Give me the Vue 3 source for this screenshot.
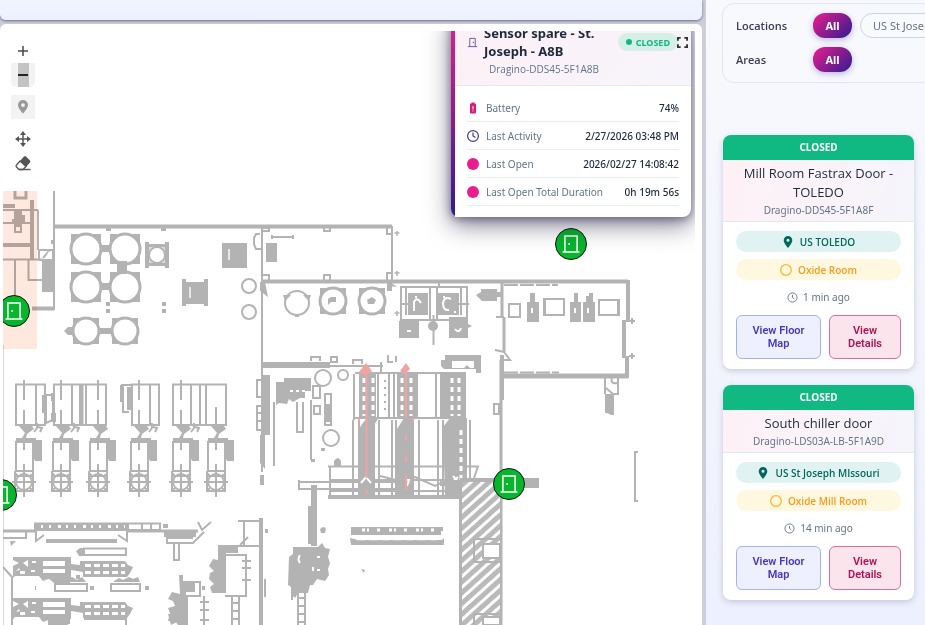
<script setup>
const MAP = { x: 3, y: 31, w: 692, h: 594 }

const markers = [
  { x: 14, y: 311 },
  { x: 1, y: 495 },
  { x: 571, y: 244 },
  { x: 508.5, y: 484 },
]
const place = (m) => ({
  left: `${((m.x - MAP.x) / MAP.w) * 100}%`,
  top: `${((m.y - MAP.y) / MAP.h) * 100}%`,
})

const rows = [
  { label: 'Battery', value: '74%', icon: 'battery' },
  { label: 'Last Activity', value: '2/27/2026 03:48 PM', icon: 'clock' },
  { label: 'Last Open', value: '2026/02/27 14:08:42', icon: 'dot' },
  { label: 'Last Open Total Duration', value: '0h 19m 56s', icon: 'dot' },
]

const cards = [
  { name: 'Mill Room Fastrax Door - TOLEDO', id: 'Dragino-DDS45-5F1A8F', site: 'US TOLEDO', area: 'Oxide Room', ago: '1 min ago' },
  { name: 'South chiller door', id: 'Dragino-LDS03A-LB-5F1A9D', site: 'US St Joseph MIssouri', area: 'Oxide Mill Room', ago: '14 min ago' },
]

const tanks = [
  [86, 249, 15], [125, 249, 15], [86, 287, 15], [125, 287, 15],
  [86, 331, 13], [125, 331, 13], [333, 301, 13], [372, 301, 13],
]
const units = [24, 61, 98, 139, 181, 216]
const spokes = [0, 45, 90, 135]
const mixers = [[13, 557], [13, 598]]
</script>

<template>
  <div class="app">
    <main class="left">
      <div class="toolbar-end"></div>
      <section class="panel">
        <div class="map">
          <svg class="plan" viewBox="3 31 692 594" aria-hidden="true">
            <defs>
              <pattern id="hatch" width="8" height="8" patternUnits="userSpaceOnUse" patternTransform="rotate(-42)">
                <rect width="8" height="8" fill="#bababa" />
                <rect width="8" height="3" fill="#fff" />
              </pattern>
            </defs>

            <!-- north-west rooms -->
            <g class="ln">
              <path d="M54 191V310M38 210V250M3 210H38M3 223H30M3 259.500H42M15 260V297M28.500 260V280H42M38 250H54" />
              <path d="M3 345V625" stroke-width="1" />
              <path d="M15 191V198H26V191" stroke-width="3" />
              <path d="M54 226.500H392" stroke-width="4" />
              <path d="M3 206H15M3 245H34M32 200V260M32 308.500H54" stroke-width="4" />
              <path d="M39 250H53V260H39ZM43 258L50 250" />
            </g>
            <path class="fl" d="M42 260H54V292H42ZM14 211H22V215H25V222H22V233H14V224H12V219H14ZM51 240h4v4h-4z" />
            <path d="M16 227h4v4h-4zM49 251l3 4-3 4h-4z" fill="#fff" />
            <path class="fl" d="M99 328h15v6h-15zM64 331l4-4h4v8h-4zM106 228h5v3h-5zM161 228h5v3h-5zM106 302h4v4h-4zM106 309h4v4h-4zM162 302h4v4h-4zM162 309h4v4h-4z" />
            <g v-for="(t, i) in tanks" :key="'t' + i">
              <rect class="fl" :x="t[0] - t[2]" :y="t[1] - t[2]" :width="t[2] * 2" :height="t[2] * 2" />
              <circle :cx="t[0]" :cy="t[1]" :r="t[2] + 1" fill="#fff" />
              <circle class="tank" :cx="t[0]" :cy="t[1]" :r="t[2]" />
              <path class="fl" :transform="`translate(${t[0]} ${t[1]}) scale(${t[2] / 15})`" d="M-15-15h7l-7 7zM15-15h-7l7 7zM-15 15h7l-7-7zM15 15h-7l7-7z" />
            </g>
            <path class="fl" d="M117 261h10v13h-10zM101 245h10v7h-10zM101 283h10v7h-10z" />
            <path class="fl" d="M145 242h4v2h16v-2h4v26h-4v-2h-16v2h-4zM222 243h25v25h-25zM182 279h4v3h18v-3h4v27h-4v-2h-18v2h-4z" />
            <rect x="149" y="247" width="16" height="16" fill="#ddd" />
            <circle class="tank thin" cx="157" cy="255" r="8" />
            <path d="M229 249v11M190 287v11" stroke="#e8e8e8" stroke-width="2" />
            <g class="tank thin">
              <circle cx="249" cy="286" r="7" /><circle cx="249" cy="312" r="7" />
              <circle cx="297" cy="303" r="12" />
            </g>
            <path class="fl" d="M283 295h8l-6 6zM311 295h-8l6 6zM295 314h4v3h-4zM328 299l3-2h5v5h-5l-3 3zM367 300l5-3 4 3-2 4h-6z" />

            <!-- centre hall -->
            <g class="ln">
              <path d="M262 226V472M392 226V281M272 237H293M272 235v4M293 235v4" />
              <path d="M262 281.500H628" stroke-width="4" />
              <path d="M262 228h7v3h-7M324 228v3h6v-3M387 228v6h5M262 275h7v6M324 281v-6h6v6M387 281v-8h5M260 234h-4l-2 4v6l2 5h5" />
              <path d="M397 231v5M394.500 233h5M397 271v5M394.500 273h5M397 311v5M394.500 313h5" stroke-width="1.500" />
              <path d="M401 287H467V320H401ZM406 287V315M430 287V320M437 287V320M461 287V315M401 304h8M459 304h10M433.500 315V345M439 281v6" />
            </g>
            <path class="fl" d="M266 243h11v19h-11zM387 283h5v8h-5zM390 282l7 5-7-1zM260 282h5l3 15-8-6zM408 293h20v22h-20zM438 293h21v22h-21zM399 321h20v17h-20zM449 317h19v21h-19zM468 324l4 2-4 2z" />
            <circle class="fl" cx="433" cy="326" r="5" />
            <path d="M414 311v-9q3-6 7 1M451 299q-7-3-8 4 0 8 6 7M407 331h4M455 329q4 5 6-1M415 297h2M443 297h2M454 312h2" class="white" />
            <path class="fl" d="M476 295l5-3v-3h16v3h4v5h-4v4h-15z" />

            <!-- east room -->
            <g class="ln">
              <path d="M502 283V317M504 317V352M501 360V625" stroke-width="3" />
              <path d="M628 280V322M624 320V358M627 356V378" stroke-width="4" />
              <path d="M502 376H628" stroke-width="5" />
              <path d="M504 285H558M504 372.500H559" stroke-dasharray="14 2" />
              <path d="M509 304h11v13h-11zM544 299h20v16h-20zM599 300h20v15h-20zM545 299v16M618 299v16M496 317h8M495 350l9 2 6 8h-10M629 321h6M632 318v6M629 356h6M632 353v6M605 378V394M618 378V394H613L606 388M612 378q-2 6 5 5" />
              <path d="M638 452H635V501H638" />
              <path d="M494 404h5v10h-5z" />
            </g>
            <path class="fl" d="M527 302h3v-9h5v9h4v20h-12zM570 302h4v-9h4v9h3v20h-11zM583 302h3v-6h3v-3h4v9h2v20h-12zM605 394h9v21h-3l-4-2h-2zM500 355h4v45h-4z" />
            <path d="M532 308v5M575 308v5M588 308v5" class="white" />

            <!-- hall bottom wall and press lines -->
            <g class="ln">
              <path d="M262 365H330" stroke-width="6" />
              <path d="M320 366H383M311 361v-4h9v4M331 357h6v5h-6zM353 364v-4h9v4M388 355v7h5M396 356v6M381 362v10" />
              <path d="M257 380h6v17h-6zM257 406h6v24h-6zM257 413h6M257 421h6" />
              <path d="M274 402V466M297 402V432H303V402M311 400V460M313 386h7v12h-7zM314 406h6v8h-6zM325 394h6v31h-6z" />
              <circle cx="323" cy="378" r="8" /><circle cx="343" cy="375" r="5" /><circle cx="331" cy="438" r="8" />
              <path d="M355 373H466M355 418H466M354 374V420M378 374V418M389 374V418M394 374V418M417 374V418M436 374V418M441 374V418" />
              <path d="M353 420V496M359 420V496M374 420V496M379 420V496M392 420V496M396 420V496M413 420V496M419 420V496M438 420V496M443 420V496M466 420V496M470 420V485" />
              <path d="M328 466.500H478L474 478M330 466V496M298 482H400M298 489H400M330 480H462M330 491H462M299 480v10M380 476l20 5 15-4 20 9 20-10" />
              <path d="M328 497H462M461 480V625" stroke-width="4" />
            </g>
            <path class="fl" d="M263 375h7v60h-7zM260 435h5v34l-5-6zM260 475h4v10h-4zM276 382h8v-4h27v13h-6v7h-5l-7 4-4-3-2 5-8-1-3 2zM326 404h5v18h-5zM334 461q4-6 7 0v5h-7zM321 448h4v3h-4zM311 459h4v3h-4z" />
            <path class="fl" d="M359 374h17v44h-17zM397 374h20v44h-20zM442 374h24v44h-24zM441 360h4v-5h36v18h-5v-4h-32l-3-3zM360 427l6-8h12l-4 6v71h-15zM397 429l7-11h10v78h-17zM443 427l7-9h17v78h-22z" />
            <path d="M452 361h22v7h-4l-3-3-3 3h-12z" fill="#fff" />
            <path class="cells" d="M364 378V416M373 378V416M402 378V416M411 378V416M452 378V416M459 378V416M461 430V480" />
            <path class="white" d="M290 391h3M296 391h3M302 391h3M361 483l5-6 5 6M405 480h4l-2 6M450 484l8-7M453 476l7 8" />
            <path class="dots" d="M385 380V410" />
            <g class="red">
              <path d="M366.500 365V478M366.500 490v5M406 365V417M359 418v4M413 418v4M406 435v5M406 455v7M406 475v15" />
              <path d="M358 373l8-10 6 8-6 4zM400 371l6-8 4 6-5 5z" class="redfill" />
            </g>
            <path class="fl" d="M440 480h64v6h-64zM508 478h31v10h-31z" />

            <!-- hatched corridor -->
            <rect x="462" y="482" width="40" height="143" fill="url(#hatch)" />
            <path class="ln" d="M461 482V625M501 482V625M474 539H501M474 562H501M474 539V562M474 614H501M474 614V625" stroke-width="3" />
            <path d="M483 544h17v14h-17zM483 617h17v8h-17z" fill="#fff" stroke="#b3b3b3" stroke-width="2" />
            <path class="fl" d="M460 478h44v4h-44z" />

            <!-- benches and pump skid -->
            <path class="fl" d="M351 527h92v4h-2v4h-90zM350 538l8 2h84l2-2v7h-93z" />
            <path d="M362 530h75" stroke="#fff" stroke-width="3" stroke-dasharray="3 2 2 8 3 9" />
            <path d="M357 539.500h80" stroke="#fff" stroke-width="1.500" stroke-dasharray="9 3" />
            <path class="fl" d="M311 485h6v61h-6zM308 506h4v38h-4zM289 557l4-3v-7h25l4-4 3 5 5 1-2 8 2 6-2 6 1 6-4 6-8-2-4 6h-3l-2 8h-10l-3 5-4-4v-7l-3-2zM320 529q4-4 6 0l-1 4h-4zM361 569l4 1-1 3z" />
            <path d="M300 555q-3 4 0 8M313 567v4M317 557h3M317 570h3" class="white" />
            <path class="ln" d="M312 490V507M292 580V600M298 590V625M305 590V625M298 598h7M298 606h7M298 614h7M298 622h7" />

            <!-- west process lines -->
            <g class="ln">
              <path d="M16 384.500H45V425H16ZM36 384V425M54 384.500H106V425H54ZM72 384V425M80 384V425M86 384V425M132 384.500H159V425H132ZM150 384V425M173 384.500H226V425H173ZM191 384V425M200 384V425M206 384V425M121 385H132M123 385V412H129M46 395h7v25l-7 3z" />
              <path d="M82 384V425" stroke-width="3" />
              <path d="M24 380v20M24 410v15M61 380v20M61 410v15M98 380v20M98 410v15M139 380v20M139 410v15M181 380v20M181 410v15M216 407v18" />
            </g>
            <path class="fl" d="M120 385h3v17h-3zM127 387h5v23h-5zM42 395h3v18h-3zM51 393h4v8h-4zM51 413h5v9h-5z" />
            <g v-for="x in units" :key="'u' + x" :transform="`translate(${x} 0)`">
              <path class="fl" d="M-5 426h13l2 3-7 5-1 4h10v2h6v21h-7l-2-5v-15h-17v-3h6l3-5z" />
              <path v-if="x !== 98 && x !== 216" class="ln" d="M13 423v5l-3 4M14 427l4 1-2 4" />
              <path class="ln" d="M-8 442H9V471H-8ZM0 442v8M0 464v33M-12 482H12M-9 471v5h18v-5M-9 477v14h18v-14" />
              <circle class="ln" cx="0" cy="482" r="8" />
              <g v-for="a in spokes" :key="a">
                <path class="ln" :transform="`rotate(${a} 0 482)`" d="M0 471v3M0 490v4" stroke-width="3" />
              </g>
            </g>
            <g class="ln">
              <path d="M3 531H35M128 531H198" stroke-width="3" />
              <path d="M35 523.500H160V530H35ZM36 530V541L44 535M127 530V541L118 535M142 524v6M151 524v6M3 538H26V532M167 533V543H193L204 532M167 538H193M174 544V560H179V544M198 522l4 8 9-8" />
              <path d="M46 541H117" stroke-width="4" />
              <path d="M84 548.500H126V555H84ZM55 584H87V591H55ZM111 584H140V591H111ZM3 567L12 577V625" />
              <path d="M238 521H262M244 521V545M226 546H262M226 555H246V596H225M242 561h9M242 568h9M242 580h9M232 596V625M239 596V625M232 603h7M232 611h7M232 619h7M182 582H200V596H182M187 597V625M204 596V625M200 602h9M200 610h9M200 620h9" />
            </g>
            <path class="fl" d="M36 524h93v6h-93zM76 551l4-3h5v8h-6zM163 524h5v4h-5zM164 532h32v5h-32zM10 541h6l-5 5zM58 580l5-3 4 3 5-3 5 3 5-3 4 5h-28zM114 581l5-3 4 2 6-3 4 2 5-2 2 5h-26zM90 586h4v4h-4zM145 586h4v4h-4zM76 575h4v4h-4zM35 586h1v4h-1zM202 586h3v4h-3z" />
            <path d="M41 526.500H125" stroke="#fff" stroke-width="3" stroke-dasharray="2 6 2 7 3 5" />
            <g v-for="(m, i) in mixers" :key="'m' + i" :transform="`translate(${m[0]} ${m[1]})`">
              <path class="fl" d="M0 0h58v7l9 1v-4h45l3 4 5 2-3 6-3 4h-44v-5l-12-2v8h-20l-8 3-4-5h-24l-2 2z" />
              <path d="M30 4h22v5h-22zM30 12h22v4h-22zM0 3l6 3-6 3zM15 3l-5 3 5 4zM7 14h5v3h-5zM3 14l3-3 1 2zM18 13h4v2h-4zM19 4h4v2h-4z" fill="#fff" />
              <path d="M72 8.500H112M72 15.500H112" stroke="#fff" stroke-width="3" stroke-dasharray="6 3" />
              <path class="fl" d="M35 21h22v5h-16z" />
            </g>
            <path class="fl" d="M179 575h4v7h12v10h-9v33h-8l-3-4h-7l2-8-2-5 7-2-2-5-5-2 4-7 8 2zM218 545h20v8h-12v40h-14l-2-6 4-3-5-5 1-6 4-2-5-5 4-7 5 1zM168 614h6l3 8-6 3zM263 518v107h-4V518z" />
            <path class="fl" d="M264 579h2v18h-2zM265 529h3v4h-3zM48 616h18l2 9h-20z" />
            <path class="ln" d="M84 619H126V625M240 545l8-8" />

            <rect class="zone" x="3" y="191" width="34" height="158" />
          </svg>

          <button v-for="(m, i) in markers" :key="i" class="marker" :style="place(m)" aria-label="Door sensor">
            <svg viewBox="0 0 32 32"><path d="M9.500 24V7.500h13V24M7 24.500h18" fill="none" stroke="#fff" stroke-width="1.600" /><circle cx="14" cy="16" r="1" fill="#fff" /></svg>
          </button>

          <div class="tools">
            <button class="tool" aria-label="Zoom in"><svg viewBox="0 0 24 24"><path d="M12 7v10M7 12h10" fill="none" stroke="#444b55" stroke-width="1.500" /></svg></button>
            <button class="tool minus" aria-label="Zoom out"><span><svg viewBox="0 0 24 24"><path d="M7 12h10" stroke="#222" stroke-width="2" /></svg></span></button>
            <button class="tool pin" aria-label="Place sensor"><svg viewBox="0 0 24 24"><path fill="#999" fill-rule="evenodd" d="M12 5a5 5 0 0 0-5 5c0 3.500 5 8.500 5 8.500s5-5 5-8.500a5 5 0 0 0-5-5zm0 3.200a1.900 1.900 0 1 1 0 3.800 1.900 1.900 0 0 1 0-3.800z" /></svg></button>
            <button class="tool pan" aria-label="Pan"><svg viewBox="0 0 24 24"><path fill="none" stroke="#555" stroke-width="1.500" d="M12 6v12M6 12h12" /><path fill="#555" d="M12 4l3 4H9zM12 20l3-4H9zM4 12l4-3v6zM20 12l-4-3v6z" /></svg></button>
            <button class="tool" aria-label="Erase"><svg viewBox="0 0 24 24"><path fill="#555" d="M13 5.500q1-1 2 0l4 4q1 1 0 2l-4 4.500-6-6z" /><path d="M9 10l-3.500 4q-1 1 0 2l2.500 2.500h4l3-3z" fill="#fff" stroke="#555" stroke-width="1.300" /><path d="M8 18.500h11.500" stroke="#555" stroke-width="1.400" /></svg></button>
          </div>

          <article class="popup">
            <header>
              <svg class="door" viewBox="0 0 12 12"><path d="M3 10.500V1.500h6v9M1 10.500h10" fill="none" stroke="#5b55a5" /><circle cx="7" cy="6" r=".8" fill="#5b55a5" /></svg>
              <div class="names">
                <h2>Sensor spare - St. Joseph - A8B</h2>
                <p>Dragino-DDS45-5F1A8B</p>
              </div>
              <span class="status"><i></i>CLOSED</span>
            </header>
            <dl>
              <div v-for="r in rows" :key="r.label">
                <dt>
                  <svg viewBox="0 0 12 12">
                    <path v-if="r.icon === 'battery'" fill="#d81b7a" fill-rule="evenodd" d="M4.500.5h3v1H8q1 0 1 1v8q0 1-1 1H4q-1 0-1-1v-8q0-1 1-1h.5zM5.500 4v3.500h1V4zm0 4.500v1h1v-1z" />
                    <g v-else-if="r.icon === 'clock'" fill="none" stroke="#3f3a94" stroke-width="1.200"><circle cx="6" cy="6" r="5.400" /><path d="M6 2.500V6l2.500 1.500" /></g>
                    <circle v-else cx="6" cy="6" r="6" fill="#e91e8c" />
                  </svg>{{ r.label }}
                </dt>
                <dd>{{ r.value }}</dd>
              </div>
            </dl>
          </article>
          <button class="full" aria-label="Full screen"><svg viewBox="0 0 12 12"><path d="M1 4V1h3M8 1h3v3M11 8v3H8M4 11H1V8" fill="none" stroke="#333" stroke-width="2" /></svg></button>
        </div>
      </section>
    </main>

    <aside class="right">
      <section class="filters">
        <div class="filter"><span>Locations</span><button class="all">All</button><button class="opt">US St Joseph MIssouri</button></div>
        <div class="filter"><span>Areas</span><button class="all">All</button></div>
      </section>
      <div class="cards">
        <article v-for="c in cards" :key="c.id" class="card">
          <div class="state">CLOSED</div>
          <header><h3>{{ c.name }}</h3><p>{{ c.id }}</p></header>
          <div class="body">
            <div class="chip site"><svg viewBox="0 0 12 14"><path fill="#00695c" fill-rule="evenodd" d="M6 1a4.300 4.300 0 0 0-4.300 4.300C1.700 8.500 6 13 6 13s4.300-4.500 4.300-7.700A4.300 4.300 0 0 0 6 1zm0 2.800a1.500 1.500 0 1 1 0 3 1.500 1.500 0 0 1 0-3z" /></svg>{{ c.site }}</div>
            <div class="chip area"><svg viewBox="0 0 12 12"><circle cx="6" cy="6" r="5.300" fill="none" stroke="#fbb829" stroke-width="1.300" /></svg>{{ c.area }}</div>
            <div class="ago"><svg viewBox="0 0 12 12" fill="none" stroke="#64748b"><circle cx="6" cy="6" r="5" /><path d="M6 3v3l2 1.500" /></svg>{{ c.ago }}</div>
            <div class="actions"><button class="floor">View Floor Map</button><button class="details">View Details</button></div>
          </div>
        </article>
      </div>
    </aside>
  </div>
</template>

<style>
body { margin: 0; overflow: hidden; }
</style>

<style scoped>
* { box-sizing: border-box; }
h2, h3, p, dl, dd { margin: 0; }
button { font: inherit; padding: 0; border: 0; background: none; cursor: pointer; }
svg { display: block; flex: none; }
.app {
  display: grid;
  grid-template-columns: minmax(0, 702fr) minmax(0, 223fr);
  height: 100vh;
  overflow: hidden;
  background: #cdcddc;
  font-family: "Noto Sans", "Open Sans", sans-serif;
  color: #1e293b;
}
.left { display: flex; flex-direction: column; gap: 4px; min-height: 0; }
.toolbar-end {
  flex: none;
  height: 20px;
  border-radius: 0 0 6px 6px;
  background: linear-gradient(#f1f4ff, #edf1ff);
  box-shadow: 0 1px 3px rgba(40, 45, 70, .6);
}
.panel { flex: 1; min-height: 0; padding: 7px 7px 0 3px; background: #fff; border-radius: 6px 6px 0 0; }
.map { position: relative; height: 100%; overflow: hidden; background: #fff; }
.plan { width: 100%; height: auto; }
.fl { fill: #b3b3b3; }
.ln { fill: none; stroke: #b3b3b3; stroke-width: 2; }
.tank { fill: #fff; stroke: #b3b3b3; stroke-width: 3; }
.thin { stroke-width: 2; }
.white { fill: none; stroke: #fff; stroke-width: 2; }
.cells { fill: none; stroke: #fff; stroke-width: 3; stroke-dasharray: 5 4; }
.dots { fill: none; stroke: #b3b3b3; stroke-width: 2; stroke-dasharray: 2 5; }
.red { fill: none; stroke: #f0a3a3; stroke-width: 2; }
.redfill { fill: #f0a3a3; stroke: none; }
.zone { fill: #ffe9df; mix-blend-mode: multiply; }

.marker {
  position: absolute;
  width: 32px;
  height: 32px;
  border: 1px solid #0a1a0c;
  border-radius: 50%;
  background: #08b52d;
  transform: translate(-50%, -50%);
}
.marker svg { width: 100%; }

.tools { position: absolute; left: 8px; top: 8px; display: flex; flex-direction: column; }
.tool { width: 24px; height: 24px; }
.tool svg { width: 24px; height: 24px; }
.minus { background: #f3f3f3; border-radius: 0 0 5px 5px; display: flex; justify-content: center; }
.minus span { width: 11px; background: #c3c3c3; display: flex; justify-content: center; }
.pin { margin-top: 8px; background: #f3f3f3; }
.pan { margin-top: 8px; }

.popup {
  position: absolute;
  top: -19px;
  right: 4px;
  width: 240px;
  padding-left: 4px;
  border-radius: 8px;
  background: linear-gradient(#e91e8c, #311b92);
  box-shadow: 0 8px 24px rgba(30, 25, 60, .55), 0 2px 8px rgba(30, 25, 60, .45);
}
.popup header {
  display: flex;
  align-items: flex-start;
  padding: 12px 13px 7px 12px;
  background: linear-gradient(135deg, #fdf0f6, #f6f5fb);
  border-bottom: 1px solid #e6eaf0;
  border-radius: 0 8px 0 0;
}
.door { width: 11px; height: 11px; margin: 13px 6px 0 0; }
.names { flex: 1; }
.names h2 { font-size: 13px; line-height: 18px; font-weight: 700; }
.names p { margin-left: 5px; font-family: "Open Sans", sans-serif; font-size: 10px; line-height: 18px; color: #64748b; }
.status {
  display: flex;
  align-items: center;
  gap: 4px;
  height: 18px;
  margin-top: 9px;
  padding: 0 8px;
  border-radius: 9px;
  background: #d5efe6;
  color: #10b981;
  font-size: 9px;
  font-weight: 700;
}
.status i { width: 6px; height: 6px; border-radius: 50%; background: #10b981; }
.popup dl { padding: 8px 12px 11px; background: #fff; border-radius: 0 0 8px 0; }
.popup dl div { display: flex; justify-content: space-between; align-items: center; height: 28px; border-bottom: 1px solid #e9ecf1; }
.popup dt { display: flex; align-items: center; gap: 7px; font-size: 10px; color: #64748b; }
.popup dt svg { width: 12px; height: 12px; }
.popup dd { font-size: 10px; font-weight: 500; }
.full { position: absolute; right: 7px; top: 6px; width: 11px; height: 11px; }
.full svg { width: 11px; height: 11px; }

.right {
  margin-left: 4px;
  padding: 3px 11px 0 16px;
  overflow: hidden;
  background: linear-gradient(#f7f9fe, #f3f5fd 55%, #edf0fe);
}
.filters {
  display: flex;
  flex-direction: column;
  gap: 9px;
  margin-right: -30px;
  padding: 9px 13px 10px;
  border: 1px solid #e0e6ef;
  border-radius: 12px;
  background: #f8f9fd;
}
.filter { display: flex; align-items: center; gap: 8px; white-space: nowrap; font-size: 11px; }
.filter > * { flex: none; }
.filter span { width: 69px; font-family: "Open Sans", sans-serif; font-weight: 600; color: #3f3a5c; }
.all {
  width: 39px;
  height: 25px;
  border-radius: 12px;
  background: linear-gradient(135deg, #e91e8c, #311b92);
  color: #fff;
  font-weight: 700;
  box-shadow: 0 2px 6px rgba(49, 27, 146, .3);
}
.opt { height: 25px; padding: 0 12px; border: 1px solid #cbd5e1; border-radius: 13px; color: #64748b; background: #f8fafc; }
.cards { display: grid; gap: 16px; margin: 52px 0 0 1px; }
.card { border-radius: 8px; overflow: hidden; background: #fff; box-shadow: 0 2px 6px rgba(60, 50, 110, .22); text-align: center; }
.state { height: 25px; line-height: 25px; background: #10b981; color: #fff; font-size: 10px; font-weight: 700; }
.card header { padding: 4px 12px 3px; background: linear-gradient(100deg, #fef1f6, #f5f5fb); border-bottom: 1px solid #e2e8f0; }
.card h3 { font-family: "Open Sans", sans-serif; font-size: 13px; line-height: 19px; font-weight: 500; }
.card p { font-size: 10px; line-height: 16px; color: #64748b; }
.body { padding: 9px 13px 10px; }
.chip { display: flex; align-items: center; justify-content: center; gap: 6px; height: 21px; border-radius: 11px; font: 500 10px "Open Sans", sans-serif; }
.chip svg { width: 12px; height: 14px; }
.site { background: #e0f2f1; color: #00695c; font-weight: 600; }
.area { margin-top: 7px; background: #fff8e1; color: #fb9a1b; font-weight: 600; }
.ago { display: flex; align-items: center; justify-content: center; gap: 5px; height: 18px; margin: 8px 0 9px; font-size: 10px; color: #64748b; }
.ago svg { width: 11px; height: 11px; }
.actions { display: grid; grid-template-columns: 85fr 72fr; gap: 8px; }
.actions button { height: 44px; border: 1px solid; border-radius: 6px; font: 600 11px/13px Roboto, sans-serif; }
.floor { padding: 0 14px; background: #eef0ff; color: #4838c0; }
.actions .floor { border-color: #a5b4e8; }
.details { padding: 0 14px; background: #fce4ec; color: #ad1457; }
.actions .details { border-color: #d4709a; }
</style>
